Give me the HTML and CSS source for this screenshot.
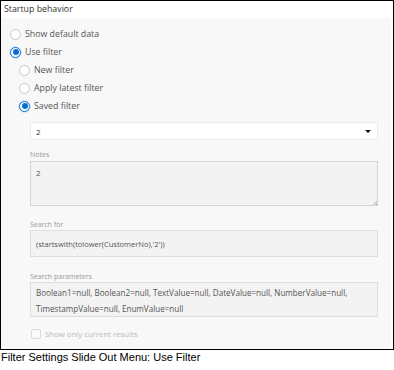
FILE: index.html
```html
<!DOCTYPE html>
<html lang="en">
    <head>
        <meta charset="UTF-8" />
        <meta name="viewport" content="width=device-width, initial-scale=1.0" />
        <title>Filter Settings</title>
        <link rel="stylesheet" href="styles.css">
    </head>
    <body>
        <div class="frame">
            <div class="header">Startup behavior</div>
            <div class="panel">
                <label class="radio-row">
                    <span class="radio"></span>
                    Show default data
                </label>
                <label class="radio-row">
                    <span class="radio checked"></span>
                    Use filter
                </label>
                <div class="sub-options">
                    <label class="radio-row">
                        <span class="radio"></span>
                        New filter
                    </label>
                    <label class="radio-row">
                        <span class="radio"></span>
                        Apply latest filter
                    </label>
                    <label class="radio-row">
                        <span class="radio checked"></span>
                        Saved filter
                    </label>
                </div>

                <div class="fields">
                    <div class="select">
                        <span>2</span>
                        <span class="caret"></span>
                    </div>

                    <div class="field notes-field">
                        <div class="field-label">Notes</div>
                        <div class="notes-wrap">
                            <textarea class="notes" readonly>2</textarea>
                            <span class="grip"></span>
                        </div>
                    </div>

                    <div class="field search-field">
                        <div class="field-label">Search for</div>
                        <div class="readonly-box">(startswith(tolower(CustomerNo),'2'))</div>
                    </div>

                    <div class="field params-field">
                        <div class="field-label">Search parameters</div>
                        <div class="readonly-box params">Boolean1=null, Boolean2=null, TextValue=null, DateValue=null, NumberValue=null, TimestampValue=null, EnumValue=null</div>
                    </div>

                    <label class="check-row">
                        <span class="checkbox"></span>
                        Show only current results
                    </label>
                </div>
            </div>
        </div>
        <p class="caption">Filter Settings Slide Out Menu: Use Filter</p>
    </body>
</html>
```

FILE: styles.css
```css
body {
    margin: 0;
    font-family: "Open Sans", sans-serif;
}

.frame {
    width: 394px;
    height: 350px;
    box-sizing: border-box;
    border: 1px solid #000;
    background: #fff;
    display: flex;
    flex-direction: column;
}

.header {
    height: 17px;
    line-height: 17px;
    padding-left: 3px;
    font-size: 8.8px;
    color: #333;
}

.panel {
    flex: 1;
    background: #f8f8f8;
    margin-right: 2px;
    padding: 7px 13px 0 9px;
}

.radio-row {
    display: flex;
    align-items: center;
    gap: 4px;
    height: 18px;
    font-size: 8.8px;
    color: #555;
}

.radio {
    width: 11px;
    height: 11px;
    box-sizing: border-box;
    border: 1px solid #c8c8c8;
    border-radius: 50%;
    background: #fff;
    display: flex;
    align-items: center;
    justify-content: center;
}

.radio.checked {
    border: 1.5px solid #0a6ed1;
    box-shadow: 0 0 0 1px #d5e6f7;
}

.radio.checked::after {
    content: "";
    width: 6px;
    height: 6px;
    border-radius: 50%;
    background: #0a6ed1;
}

.sub-options {
    padding-left: 9px;
}

.fields {
    padding-left: 20px;
    padding-top: 7px;
}

.select {
    height: 18px;
    box-sizing: border-box;
    border: 1px solid #ebebeb;
    background: #fff;
    display: flex;
    align-items: center;
    justify-content: space-between;
    padding: 0 6px 0 5px;
    font-size: 8px;
    color: #333;
}

.caret {
    width: 0;
    height: 0;
    border-left: 3px solid transparent;
    border-right: 3px solid transparent;
    border-top: 3px solid #111;
}

.field-label {
    height: 11px;
    line-height: 11px;
    font-size: 7px;
    color: #999;
}

.notes-field {
    margin-top: 9px;
}

.notes-field .field-label {
    height: 12px;
    line-height: 12px;
}

.notes-wrap {
    position: relative;
}

.notes {
    display: block;
    width: 100%;
    height: 45px;
    box-sizing: border-box;
    margin: 0;
    border: 1px solid #d6d6d6;
    background: #f3f3f3;
    padding: 3px 5px;
    font-family: "Open Sans", sans-serif;
    font-size: 8px;
    line-height: 16px;
    color: #555;
    resize: none;
    outline: none;
}

.grip {
    position: absolute;
    right: 1px;
    bottom: 1px;
    width: 4px;
    height: 4px;
    background: linear-gradient(135deg, transparent 45%, #bbb 45%, #bbb 60%, transparent 60%, transparent 75%, #bbb 75%);
}

.search-field {
    margin-top: 13px;
}

.params-field {
    margin-top: 14px;
}

.readonly-box {
    box-sizing: border-box;
    height: 27px;
    border: 1px solid #dedede;
    background: #f3f3f3;
    padding: 5px 5px 0;
    font-size: 7.5px;
    line-height: 16px;
    color: #555;
}

.readonly-box.params {
    height: 35px;
    padding-top: 2px;
    font-size: 8.1px;
}

.check-row {
    display: flex;
    align-items: center;
    gap: 4px;
    height: 12px;
    margin-top: 11px;
    padding-left: 1px;
    font-size: 7.8px;
    color: #bbb;
}

.checkbox {
    width: 10px;
    height: 10px;
    box-sizing: border-box;
    border: 1px solid #dcdcdc;
    border-radius: 2px;
    background: #fbfbfb;
}

.caption {
    margin: 0;
    padding: 1px 0 0 1px;
    font-family: "Liberation Sans", Arial, sans-serif;
    font-size: 11px;
    line-height: 13px;
    color: #000;
}
```
